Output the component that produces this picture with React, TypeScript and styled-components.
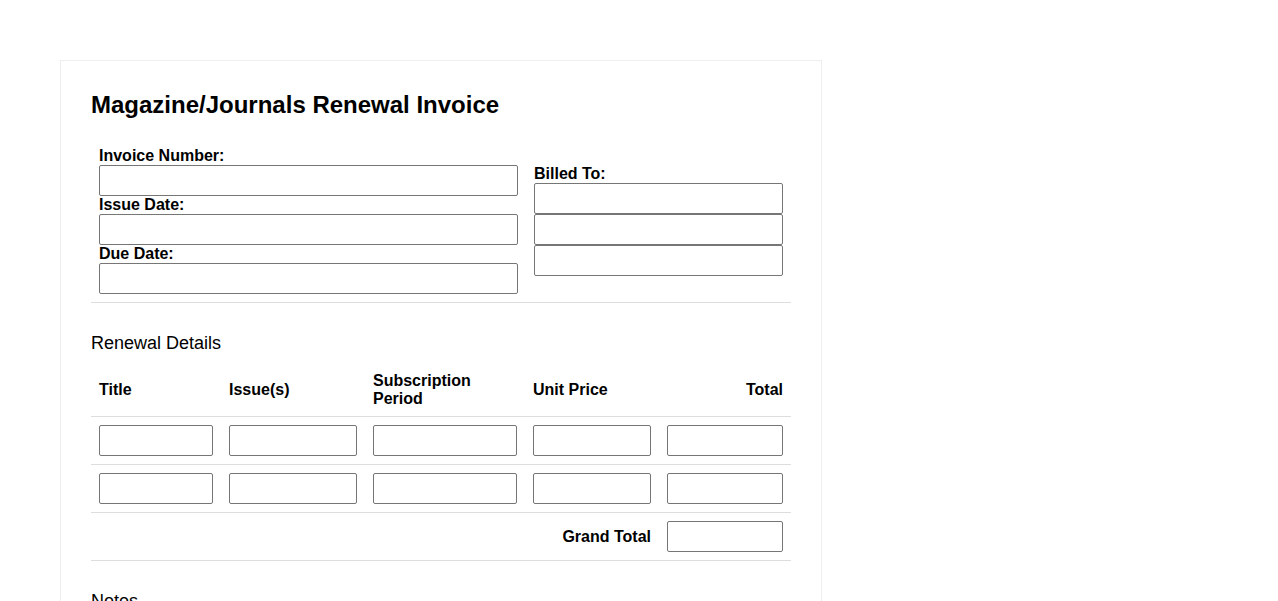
import React from "react";
import styled, { createGlobalStyle } from "styled-components";

const GlobalStyle = createGlobalStyle`
  body {
    margin: 0;
    background: #fff;
    font-family: "Liberation Sans", Arial, sans-serif;
    color: #000;
  }
`;

const Page = styled.div`
  padding: 60px;
`;

const Card = styled.div`
  width: 700px;
  padding: 30px;
  border: 1px solid #eee;
  background: #fff;
`;

const Title = styled.h1`
  margin: 0 0 20px;
  font-size: 24px;
  font-weight: bold;
`;

const Table = styled.table`
  width: 100%;
  border-collapse: collapse;
  table-layout: fixed;
`;

const Row = styled.tr`
  border-bottom: 1px solid #ddd;
`;

const Cell = styled.td<{ align?: "left" | "right" }>`
  padding: 8px;
  vertical-align: middle;
  text-align: ${(p) => p.align || "left"};
  font-size: 16px;
  line-height: 18px;
`;

const HeadCell = styled.th<{ align?: "left" | "right" }>`
  padding: 8px;
  vertical-align: middle;
  text-align: ${(p) => p.align || "left"};
  font-size: 16px;
  line-height: 18px;
  font-weight: bold;
`;

const Label = styled.label`
  display: block;
  font-size: 16px;
  line-height: 18px;
  font-weight: bold;
`;

const Input = styled.input`
  display: block;
  width: 100%;
  height: 31px;
  box-sizing: border-box;
  margin: 0;
  padding: 2px 6px;
  border: 1px solid #767676;
  border-radius: 2px;
  font-family: inherit;
  font-size: 14px;
  background: #fff;
`;

const Section = styled.h3`
  margin: 30px 0 10px;
  font-size: 18px;
  font-weight: normal;
`;

const Notes = styled.textarea`
  display: block;
  width: 100%;
  height: 80px;
  box-sizing: border-box;
  border: 1px solid #767676;
  border-radius: 2px;
  font-family: inherit;
`;

const lines = [0, 1];

export default function App() {
  return (
    <Page>
      <GlobalStyle />
      <Card>
        <Title>Magazine/Journals Renewal Invoice</Title>
        <Table>
          <colgroup>
            <col style={{ width: 435 }} />
            <col style={{ width: 265 }} />
          </colgroup>
          <tbody>
            <Row>
              <Cell>
                <Label>Invoice Number:</Label>
                <Input type="text" />
                <Label>Issue Date:</Label>
                <Input type="text" />
                <Label>Due Date:</Label>
                <Input type="text" />
              </Cell>
              <Cell>
                <Label>Billed To:</Label>
                <Input type="text" />
                <Input type="text" />
                <Input type="text" />
              </Cell>
            </Row>
          </tbody>
        </Table>

        <Section>Renewal Details</Section>
        <Table>
          <colgroup>
            <col style={{ width: 130 }} />
            <col style={{ width: 144 }} />
            <col style={{ width: 160 }} />
            <col style={{ width: 134 }} />
            <col style={{ width: 132 }} />
          </colgroup>
          <thead>
            <Row>
              <HeadCell>Title</HeadCell>
              <HeadCell>Issue(s)</HeadCell>
              <HeadCell>Subscription Period</HeadCell>
              <HeadCell>Unit Price</HeadCell>
              <HeadCell align="right">Total</HeadCell>
            </Row>
          </thead>
          <tbody>
            {lines.map((i) => (
              <Row key={i}>
                <Cell><Input type="text" /></Cell>
                <Cell><Input type="text" /></Cell>
                <Cell><Input type="text" /></Cell>
                <Cell><Input type="text" /></Cell>
                <Cell><Input type="text" /></Cell>
              </Row>
            ))}
            <Row>
              <Cell colSpan={4} align="right">
                <b>Grand Total</b>
              </Cell>
              <Cell><Input type="text" /></Cell>
            </Row>
          </tbody>
        </Table>

        <Section>Notes</Section>
        <Notes />
      </Card>
    </Page>
  );
}
